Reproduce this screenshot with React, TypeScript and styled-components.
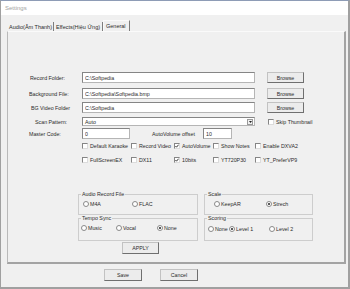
import styled, { createGlobalStyle } from "styled-components";

const GlobalStyle = createGlobalStyle`
  html, body { margin: 0; padding: 0; background: #f0f0f0; }
  body { font-family: "Liberation Sans", Arial, sans-serif; }
`;

const Window = styled.div`
  width: 350px;
  height: 289px;
  box-sizing: border-box;
  border-top: 1px solid #8e9cb6;
  border-left: 1px solid #a0a0a0;
  border-right: 2px solid #a0a0a0;
  border-bottom: 2px solid #a0a0a0;
  background: #f0f0f0;
  display: flex;
  flex-direction: column;
  color: #2b2b2b;
  font-size: 5.3px;
`;

const TitleBar = styled.div`
  height: 14px;
  flex: none;
  background: #fff;
  display: flex;
  align-items: center;
  padding-left: 4px;
  font-size: 6px;
  color: #a3a3a3;
`;

const Body = styled.div`
  display: flex;
  flex-direction: column;
  padding: 0 2px 0 6px;
`;

const TabStrip = styled.div`
  display: flex;
  align-items: flex-end;
  height: 11px;
  margin-top: 5px;
`;

const Tab = styled.div<{ $w: number; $active?: boolean }>`
  width: ${(p) => p.$w}px;
  height: ${(p) => (p.$active ? 11 : 9)}px;
  box-sizing: border-box;
  padding-left: 2px;
  display: flex;
  align-items: center;
  font-size: 5.5px;
  white-space: nowrap;
  border-right: 1px solid #7d7d7d;
  ${(p) => p.$active && "border-left: 1px solid #fafafa; border-top: 1px solid #fafafa;"}
`;

const Panel = styled.div`
  height: 233px;
  box-sizing: border-box;
  border-top: 1px solid #fafafa;
  border-left: 1px solid #b9b9b9;
  border-right: 2px solid #a3a3a3;
  border-bottom: 2px solid #a3a3a3;
  display: flex;
  flex-direction: column;
`;

const FieldRow = styled.div<{ $top: number; $h?: number }>`
  display: flex;
  align-items: center;
  margin-top: ${(p) => p.$top}px;
  height: ${(p) => p.$h ?? 11}px;
  padding-left: 21px;
`;

const Label = styled.span<{ $indent?: number; $w?: number }>`
  width: ${(p) => p.$w ?? 53}px;
  flex: none;
  box-sizing: border-box;
  padding-left: ${(p) => p.$indent ?? 0}px;
  white-space: nowrap;
`;

const TextBox = styled.input<{ $w: number; $h?: number }>`
  width: ${(p) => p.$w}px;
  height: ${(p) => p.$h ?? 11}px;
  box-sizing: border-box;
  margin: 0;
  padding: 0 2px;
  background: #fff;
  border: 1px solid #b5b5b5;
  border-top-color: #858585;
  border-left-color: #858585;
  font-family: inherit;
  font-size: 5.3px;
  color: #2b2b2b;
  outline: none;
  flex: none;
`;

const Select = styled.div`
  width: 173px;
  height: 9px;
  box-sizing: border-box;
  background: #fff;
  border: 1px solid #b5b5b5;
  border-top-color: #858585;
  border-left-color: #858585;
  display: flex;
  align-items: center;
  justify-content: space-between;
  padding-left: 2px;
  flex: none;
`;

const DropButton = styled.span`
  width: 6px;
  height: 6px;
  margin-right: 1px;
  box-sizing: border-box;
  border: 1px solid #9a9a9a;
  background: #f0f0f0;
  display: flex;
  align-items: center;
  justify-content: center;
`;

const Button = styled.button<{ $w?: number; $h?: number; $ml?: number }>`
  width: ${(p) => p.$w ?? 37}px;
  height: ${(p) => p.$h ?? 11}px;
  margin: 0 0 0 ${(p) => p.$ml ?? 0}px;
  padding: 0;
  box-sizing: border-box;
  background: #ececec;
  border: 1px solid #c2c2c2;
  border-right-color: #6f6f6f;
  border-bottom-color: #6f6f6f;
  font-family: inherit;
  font-size: 5.3px;
  color: #2b2b2b;
  flex: none;
`;

const CheckItem = styled.label<{ $ml?: number }>`
  display: flex;
  align-items: center;
  gap: 2px;
  margin-left: ${(p) => p.$ml ?? 0}px;
  white-space: nowrap;
`;

const Box = styled.span`
  width: 6px;
  height: 6px;
  box-sizing: border-box;
  background: #fff;
  border: 1px solid #858585;
  border-right-color: #dcdcdc;
  border-bottom-color: #dcdcdc;
  display: inline-flex;
  align-items: center;
  justify-content: center;
  flex: none;
`;

const CheckGrid = styled.div<{ $top: number }>`
  display: grid;
  grid-template-columns: 49px 43px 39px 42px auto;
  align-items: center;
  height: 7px;
  margin-top: ${(p) => p.$top}px;
  padding-left: 74px;
`;

const GroupRow = styled.div<{ $top: number }>`
  display: flex;
  gap: 6px;
  margin-top: ${(p) => p.$top}px;
  padding-left: 70px;
`;

const Group = styled.fieldset<{ $w: number; $h: number }>`
  width: ${(p) => p.$w}px;
  height: ${(p) => p.$h}px;
  box-sizing: border-box;
  margin: 0;
  padding: 0;
  border: 1px solid #cdcdcd;
  min-width: 0;
`;

const Legend = styled.legend`
  margin-left: 2px;
  padding: 0 1px;
  font-size: 5.3px;
  line-height: 6px;
`;

const RadioRow = styled.div<{ $indent: number; $top: number }>`
  display: flex;
  align-items: center;
  height: 6px;
  margin-top: ${(p) => p.$top}px;
  padding-left: ${(p) => p.$indent}px;
`;

const RadioItem = styled.label<{ $w?: number }>`
  display: flex;
  align-items: center;
  gap: 1px;
  width: ${(p) => (p.$w ? `${p.$w}px` : "auto")};
  flex: none;
  white-space: nowrap;
`;

const Circle = styled.span<{ $on?: boolean }>`
  width: 6px;
  height: 6px;
  box-sizing: border-box;
  border-radius: 50%;
  border: 1px solid #8a8a8a;
  background: #fff;
  display: inline-flex;
  align-items: center;
  justify-content: center;
  flex: none;
  &::after {
    content: "";
    width: 2px;
    height: 2px;
    border-radius: 50%;
    background: ${(p) => (p.$on ? "#222" : "transparent")};
  }
`;

const ApplyRow = styled.div`
  margin-top: 1px;
  padding-left: 114px;
  display: flex;
`;

const Footer = styled.div`
  display: flex;
  margin-top: 5px;
  padding-left: 97px;
  gap: 18px;
`;

function Check({ label, checked, ml }: { label?: string; checked?: boolean; ml?: number }) {
  return (
    <CheckItem $ml={ml}>
      <Box>
        {checked && (
          <svg width="4" height="4" viewBox="0 0 4 4">
            <path d="M0.4 2 L1.5 3.2 L3.6 0.7" fill="none" stroke="#222" strokeWidth="0.9" />
          </svg>
        )}
      </Box>
      {label && <span>{label}</span>}
    </CheckItem>
  );
}

function Radio({ label, on, w }: { label: string; on?: boolean; w?: number }) {
  return (
    <RadioItem $w={w}>
      <Circle $on={on} />
      <span>{label}</span>
    </RadioItem>
  );
}

export default function App() {
  return (
    <>
      <GlobalStyle />
      <Window>
        <TitleBar>Settings</TitleBar>
        <Body>
          <TabStrip>
            <Tab $w={47}>Audio(Âm Thanh)</Tab>
            <Tab $w={49}>Effects(Hiệu Ứng)</Tab>
            <Tab $w={27} $active>General</Tab>
          </TabStrip>
          <Panel>
            <FieldRow $top={40}>
              <Label $indent={1}>Record Folder:</Label>
              <TextBox $w={173} readOnly value="C:\Softpedia" />
              <Button $ml={12}>Browse</Button>
            </FieldRow>
            <FieldRow $top={5}>
              <Label>Background File:</Label>
              <TextBox $w={173} readOnly value="C:\Softpedia\Softpedia.bmp" />
              <Button $ml={12}>Browse</Button>
            </FieldRow>
            <FieldRow $top={3}>
              <Label $indent={2}>BG Video Folder</Label>
              <TextBox $w={173} readOnly value="C:\Softpedia" />
              <Button $ml={12}>Browse</Button>
            </FieldRow>
            <FieldRow $top={4} $h={9}>
              <Label $indent={6}>Scan Pattern:</Label>
              <Select>
                <span>Auto</span>
                <DropButton>
                  <svg width="3" height="2" viewBox="0 0 3 2">
                    <path d="M0 0 H3 L1.5 2 Z" fill="#222" />
                  </svg>
                </DropButton>
              </Select>
              <Check label="Skip Thumbnail" ml={13} />
            </FieldRow>
            <FieldRow $top={2}>
              <Label>Master Code:</Label>
              <TextBox $w={48} readOnly value="0" />
              <Label $w={73} $indent={22}>AutoVolume offset</Label>
              <TextBox $w={29} readOnly value="10" />
            </FieldRow>
            <CheckGrid $top={3}>
              <Check label="Default Karaoke" />
              <Check label="Record Video" />
              <Check label="AutoVolume" checked />
              <Check label="Show Notes" />
              <Check label="Enable DXVA2" />
            </CheckGrid>
            <CheckGrid $top={7}>
              <Check label="FullScreenEX" />
              <Check label="DX11" />
              <Check label="10bits" checked />
              <Check label="YT720P30" />
              <Check label="YT_PreferVP9" />
            </CheckGrid>
            <GroupRow $top={28}>
              <Group $w={120} $h={24}>
                <Legend>Audio Record File</Legend>
                <RadioRow $indent={4} $top={4}>
                  <Radio label="M4A" w={49} />
                  <Radio label="FLAC" />
                </RadioRow>
              </Group>
              <Group $w={109} $h={24}>
                <Legend>Scale</Legend>
                <RadioRow $indent={9} $top={4}>
                  <Radio label="KeepAR" w={52} />
                  <Radio label="Strech" on />
                </RadioRow>
              </Group>
            </GroupRow>
            <GroupRow $top={0}>
              <Group $w={120} $h={26}>
                <Legend>Tempo Sync</Legend>
                <RadioRow $indent={2} $top={4}>
                  <Radio label="Music" w={35} />
                  <Radio label="Vocal" w={41} />
                  <Radio label="None" on />
                </RadioRow>
              </Group>
              <Group $w={109} $h={26}>
                <Legend>Scoring</Legend>
                <RadioRow $indent={3} $top={5}>
                  <Radio label="None" w={21} />
                  <Radio label="Level 1" on w={40} />
                  <Radio label="Level 2" />
                </RadioRow>
              </Group>
            </GroupRow>
            <ApplyRow>
              <Button $h={12}>APPLY</Button>
            </ApplyRow>
          </Panel>
          <Footer>
            <Button $w={38} $h={12}>Save</Button>
            <Button $w={38} $h={12}>Cancel</Button>
          </Footer>
        </Body>
      </Window>
    </>
  );
}
